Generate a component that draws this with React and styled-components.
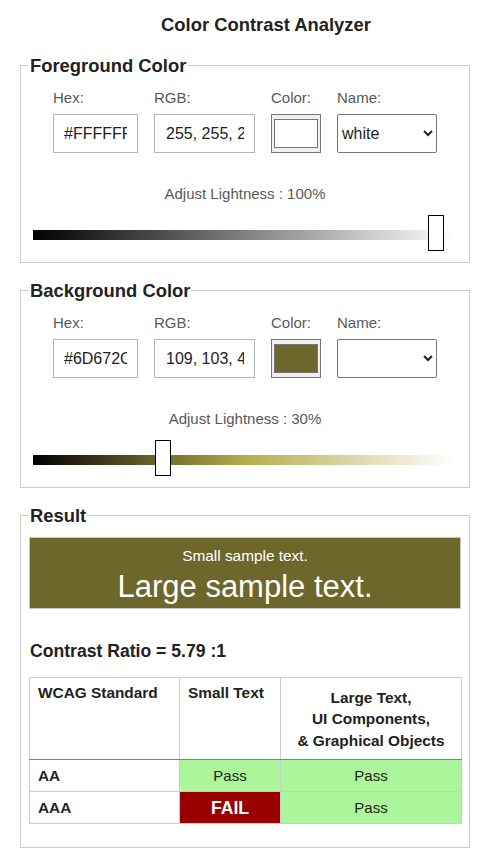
import React from 'react';
import styled, { createGlobalStyle } from 'styled-components';

const GlobalStyle = createGlobalStyle`
  html, body {
    margin: 0;
    padding: 0;
    background: #fff;
  }
  body {
    font-family: "Liberation Sans", Arial, sans-serif;
    color: #222;
  }
`;

const colors = {
  foreground: { hex: '#FFFFFF', rgb: '255, 255, 255', name: 'white', h: 0, s: 0, l: 1 },
  background: { hex: '#6D672C', rgb: '109, 103, 44', name: '', h: 54.5, s: 42.5, l: 0.3 },
};

const StyledPage = styled.div`
  width: 490px;
  padding: 14px 0 12px;
`;

const StyledTitle = styled.h1`
  margin: 0 0 0 42px;
  font-size: 18.4px;
  font-weight: bold;
  line-height: 22px;
  text-align: center;
  color: #222;
`;

const StyledFieldset = styled.fieldset`
  box-sizing: border-box;
  width: 450px;
  margin: ${p => p.$top}px 0 0 20px;
  padding: 0 0 ${p => p.$bottom}px;
  border: 1px solid #ccc;
  min-inline-size: 0;
`;

const StyledLegend = styled.legend`
  margin-left: 8px;
  padding: 0 1px;
  font-size: 18.4px;
  font-weight: bold;
  line-height: 21px;
  color: #222;
`;

const StyledInputs = styled.div`
  display: flex;
  gap: 16px;
  padding: 14px 0 0 32px;
`;

const StyledField = styled.label`
  display: flex;
  flex-direction: column;
  gap: 8px;
`;

const StyledLabel = styled.span`
  font-size: 15px;
  line-height: 16px;
  color: #595959;
`;

const StyledTextInput = styled.input`
  box-sizing: border-box;
  width: ${p => p.$width}px;
  height: 39px;
  margin: 0;
  padding: 0 10px 0 ${p => p.$pad}px;
  border: 1px solid #b5b5b5;
  border-radius: 0;
  font-family: "Liberation Sans", Arial, sans-serif;
  font-size: 16px;
  color: #222;
  background: #fff;
  outline: none;
`;

const StyledSwatch = styled.div`
  box-sizing: border-box;
  width: 50px;
  height: 39px;
  padding: 4px 2px;
  border: 1px solid #767676;
  background: #efefef;
  & > div {
    box-sizing: border-box;
    width: 100%;
    height: 100%;
    border: 1px solid #777;
    background: ${p => p.$color};
  }
`;

const StyledSelect = styled.select`
  box-sizing: border-box;
  width: 100px;
  height: 39px;
  margin: 0;
  padding: 0;
  border: 1px solid #767676;
  border-radius: 2px;
  font-family: "Liberation Sans", Arial, sans-serif;
  font-size: 16px;
  color: #222;
  background: #fff;
`;

const StyledCaption = styled.div`
  margin-top: 33px;
  font-size: 15px;
  line-height: 16px;
  color: #595959;
  text-align: center;
`;

const StyledSlider = styled.div`
  position: relative;
  width: 422px;
  height: 10px;
  margin: 28px 0 0 12px;
  background: ${p => p.$gradient};
`;

const StyledThumb = styled.div`
  position: absolute;
  top: -15px;
  box-sizing: border-box;
  width: 16px;
  height: 36px;
  border: 1px solid #000;
  background: #fff;
`;

const StyledSample = styled.div`
  box-sizing: border-box;
  width: 432px;
  height: 72px;
  margin: 11px 0 0 8px;
  padding-top: 9px;
  border: 1px solid #c8c8c8;
  background: ${p => p.$bg};
  color: ${p => p.$fg};
  text-align: center;
`;

const StyledSmallSample = styled.div`
  font-size: 15.4px;
  line-height: 18px;
`;

const StyledLargeSample = styled.div`
  font-size: 31px;
  line-height: 34px;
  margin-top: 5px;
`;

const StyledRatio = styled.div`
  margin: 32px 0 0 9px;
  font-size: 17.6px;
  font-weight: bold;
  line-height: 20px;
  color: #222;
`;

const StyledTable = styled.table`
  width: 432px;
  margin: 16px 0 0 8px;
  border-collapse: collapse;
  table-layout: fixed;
  font-size: 15.4px;
  color: #222;
  th, td {
    border: 1px solid #ccc;
    padding: 0 8px;
  }
  th {
    height: 72px;
    vertical-align: top;
    text-align: left;
    padding-top: 4px;
    line-height: 21px;
    border-bottom: 1px solid #808080;
  }
  th.wide {
    text-align: center;
    padding-top: 9px;
    line-height: 21.3px;
  }
  td {
    height: 31px;
    line-height: 20px;
  }
`;

const StyledLevel = styled.td`
  font-weight: bold;
`;

const StyledVerdict = styled.td`
  text-align: center;
  background: ${p => (p.$pass ? '#abf69b' : '#990000')};
  color: ${p => (p.$pass ? '#222' : '#fff')};
  font-weight: ${p => (p.$pass ? 'normal' : 'bold')};
  font-size: ${p => (p.$pass ? '15px' : '17.6px')};
`;

const gradientFor = ({ h, s }) =>
  `linear-gradient(to right, hsl(${h}, ${s}%, 0%), hsl(${h}, ${s}%, 50%), hsl(${h}, ${s}%, 100%))`;

const ColorPanel = ({ title, color, top }) => (
  <StyledFieldset $top={top} $bottom={22}>
    <StyledLegend>{title}</StyledLegend>
    <StyledInputs>
      <StyledField>
        <StyledLabel>Hex:</StyledLabel>
        <StyledTextInput $width={85} $pad={10} defaultValue={color.hex} />
      </StyledField>
      <StyledField>
        <StyledLabel>RGB:</StyledLabel>
        <StyledTextInput $width={101} $pad={11} defaultValue={color.rgb} />
      </StyledField>
      <StyledField as="div">
        <StyledLabel>Color:</StyledLabel>
        <StyledSwatch $color={color.hex}><div /></StyledSwatch>
      </StyledField>
      <StyledField>
        <StyledLabel>Name:</StyledLabel>
        <StyledSelect defaultValue={color.name}>
          <option value=""></option>
          <option value="white">white</option>
          <option value="black">black</option>
        </StyledSelect>
      </StyledField>
    </StyledInputs>
    <StyledCaption>Adjust Lightness : {Math.round(color.l * 100)}%</StyledCaption>
    <StyledSlider $gradient={gradientFor(color)}>
      <StyledThumb style={{ left: 5 + 390 * color.l }} />
    </StyledSlider>
  </StyledFieldset>
);

export default function App() {
  const fg = colors.foreground;
  const bg = colors.background;
  return (
    <StyledPage>
      <GlobalStyle />
      <StyledTitle>Color Contrast Analyzer</StyledTitle>
      <ColorPanel title="Foreground Color" color={fg} top={19} />
      <ColorPanel title="Background Color" color={bg} top={17} />
      <StyledFieldset $top={17} $bottom={23}>
        <StyledLegend>Result</StyledLegend>
        <StyledSample $bg={bg.hex} $fg={fg.hex}>
          <StyledSmallSample>Small sample text.</StyledSmallSample>
          <StyledLargeSample>Large sample text.</StyledLargeSample>
        </StyledSample>
        <StyledRatio>Contrast Ratio = 5.79 :1</StyledRatio>
        <StyledTable>
          <colgroup>
            <col style={{ width: 150 }} />
            <col style={{ width: 101 }} />
            <col style={{ width: 181 }} />
          </colgroup>
          <thead>
            <tr>
              <th>WCAG Standard</th>
              <th>Small Text</th>
              <th className="wide">Large Text,<br />UI Components,<br />&amp; Graphical Objects</th>
            </tr>
          </thead>
          <tbody>
            <tr>
              <StyledLevel>AA</StyledLevel>
              <StyledVerdict $pass>Pass</StyledVerdict>
              <StyledVerdict $pass>Pass</StyledVerdict>
            </tr>
            <tr>
              <StyledLevel>AAA</StyledLevel>
              <StyledVerdict>FAIL</StyledVerdict>
              <StyledVerdict $pass>Pass</StyledVerdict>
            </tr>
          </tbody>
        </StyledTable>
      </StyledFieldset>
    </StyledPage>
  );
}
